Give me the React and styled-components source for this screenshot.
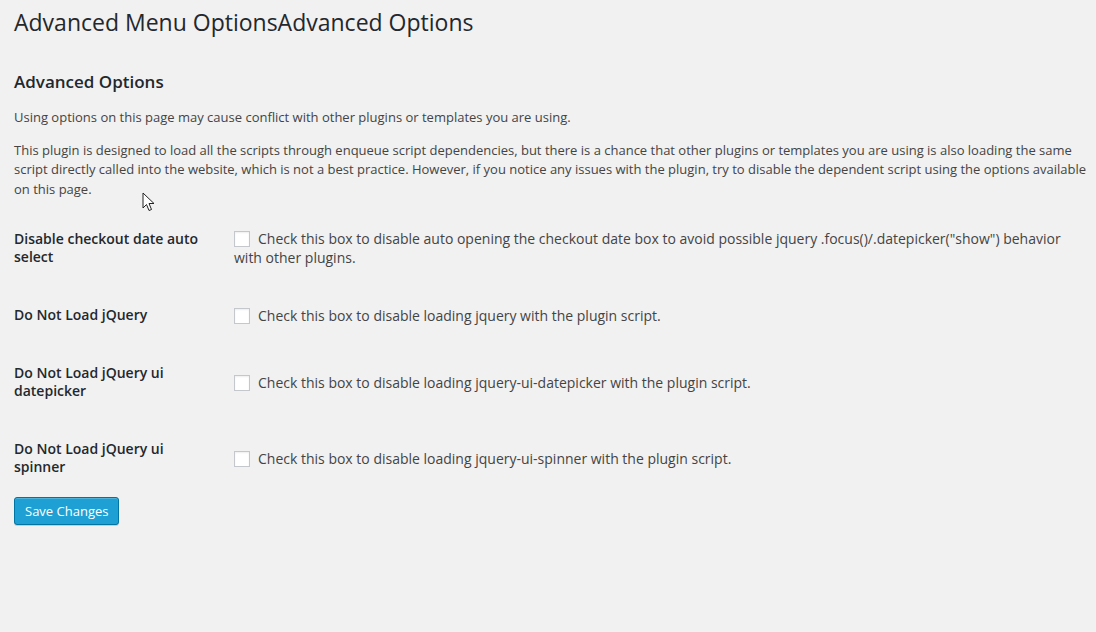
import React from 'react';
import styled, { createGlobalStyle } from 'styled-components';

const GlobalStyle = createGlobalStyle`
  html, body {
    margin: 0;
    padding: 0;
    background: #f1f1f1;
  }
  body {
    font-family: "Open Sans", "Liberation Sans", sans-serif;
    font-size: 13px;
    color: #444;
  }
`;

const Wrap = styled.div`
  position: relative;
  padding: 0 6px 0 14px;
  min-height: 632px;
  box-sizing: border-box;
`;

const Title = styled.h1`
  margin: 0;
  padding: 8px 0 4px;
  font-size: 23px;
  font-weight: 400;
  line-height: 29px;
  color: #23282d;
`;

const SectionTitle = styled.h2`
  margin: 30px 0 0;
  font-size: 17px;
  font-weight: 600;
  line-height: 22px;
  color: #23282d;
`;

const Text = styled.p`
  margin: ${p => p.$top || 13}px 0 0;
  font-size: 13px;
  line-height: 19.5px;
`;

const FormTable = styled.table`
  margin-top: 11px;
  width: 100%;
  border-collapse: collapse;
`;

const Th = styled.th`
  width: 200px;
  padding: 20px 10px 20px 0;
  text-align: left;
  vertical-align: top;
  font-size: 14px;
  font-weight: 600;
  line-height: 18px;
  color: #23282d;
`;

const Td = styled.td`
  padding: 15px 10px;
  vertical-align: middle;
  font-size: 14px;
  line-height: 19px;
  color: #444;
`;

const Box = styled.span`
  display: inline-block;
  width: 16px;
  height: 16px;
  box-sizing: border-box;
  border: 1px solid #c4c8cc;
  background: #fff;
  box-shadow: inset 0 1px 2px rgba(0, 0, 0, 0.07);
  vertical-align: -3px;
  margin-right: 8px;
`;

const Submit = styled.div`
  padding: 1px 0;
`;

const PrimaryButton = styled.button`
  height: 28px;
  padding: 0 10px 1px;
  font-family: "Open Sans", "Liberation Sans", sans-serif;
  font-size: 13px;
  line-height: 26px;
  color: #fff;
  background: #1ea0d4;
  border: 1px solid #0074a2;
  border-radius: 3px;
  box-shadow: inset 0 1px 0 rgba(120, 200, 230, 0.5), 0 1px 0 rgba(0, 0, 0, 0.15);
  cursor: pointer;
`;

const Pointer = styled.svg`
  position: absolute;
  left: 142px;
  top: 192px;
`;

const rows = [
  {
    label: 'Disable checkout date auto select',
    text: 'Check this box to disable auto opening the checkout date box to avoid possible jquery .focus()/.datepicker("show") behavior with other plugins.',
  },
  { label: 'Do Not Load jQuery', text: 'Check this box to disable loading jquery with the plugin script.' },
  {
    label: 'Do Not Load jQuery ui datepicker',
    text: 'Check this box to disable loading jquery-ui-datepicker with the plugin script.',
  },
  {
    label: 'Do Not Load jQuery ui spinner',
    text: 'Check this box to disable loading jquery-ui-spinner with the plugin script.',
  },
];

export default function App() {
  return (
    <>
      <GlobalStyle />
      <Wrap>
        <Title>Advanced Menu OptionsAdvanced Options</Title>
        <SectionTitle>Advanced Options</SectionTitle>
        <Text $top={15}>Using options on this page may cause conflict with other plugins or templates you are using.</Text>
        <Text>
          This plugin is designed to load all the scripts through enqueue script dependencies, but there is a chance
          that other plugins or templates you are using is also loading the same script directly called into the
          website, which is not a best practice. However, if you notice any issues with the plugin, try to disable the
          dependent script using the options available on this page.
        </Text>
        <FormTable>
          <tbody>
            {rows.map(row => (
              <tr key={row.label}>
                <Th>{row.label}</Th>
                <Td>
                  <Box />
                  {row.text}
                </Td>
              </tr>
            ))}
          </tbody>
        </FormTable>
        <Submit>
          <PrimaryButton type="button">Save Changes</PrimaryButton>
        </Submit>
        <Pointer width="14" height="20" viewBox="0 0 14 20">
          <path d="M1 1 L1 16 L4.5 12.5 L7 18.5 L9.5 17.5 L7 11.5 L12 11.5 Z" fill="#fff" stroke="#222" strokeWidth="1" strokeLinejoin="round" />
        </Pointer>
      </Wrap>
    </>
  );
}
